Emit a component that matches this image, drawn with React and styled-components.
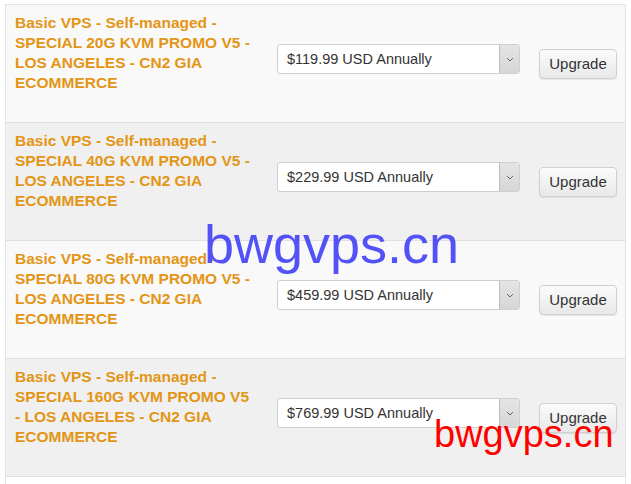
import React from "react";
import styled, { createGlobalStyle } from "styled-components";

const Global = createGlobalStyle`
  html, body { margin: 0; padding: 0; background: #ffffff; }
  body { font-family: "Liberation Sans", Arial, sans-serif; width: 631px; height: 484px; overflow: hidden; position: relative; }
`;

const Page = styled.div`
  padding: 4px 5px 0 5px;
  width: 621px;
  box-sizing: content-box;
`;

const Table = styled.div`
  border: 1px solid #e3e3e3;
  border-bottom: none;
  display: flex;
  flex-direction: column;
`;

const Row = styled.div`
  display: grid;
  grid-template-columns: 243px 243px 78px;
  column-gap: 19px;
  align-items: start;
  height: 118px;
  box-sizing: border-box;
  padding: 8px 0 0 9px;
  background: ${(p) => (p.$alt ? "#f0f0f0" : "#f9f9f9")};
  border-bottom: 1px solid #e0e0e0;
`;

const BlankRow = styled.div`
  height: 20px;
  background: #ffffff;
`;

const Title = styled.div`
  font-size: 15.5px;
  line-height: 20px;
  font-weight: bold;
  color: #e39516;
  width: 240px;
`;

const Select = styled.div`
  margin-top: 31px;
  height: 30px;
  box-sizing: border-box;
  display: flex;
  border: 1px solid #cfcfcf;
  border-radius: 3px;
  background: #ffffff;
  overflow: hidden;
`;

const SelectValue = styled.div`
  flex: 1;
  font-size: 14.5px;
  line-height: 28px;
  color: #333333;
  padding-left: 9px;
`;

const Arrow = styled.div`
  width: 19px;
  border-left: 1px solid #bdbdbd;
  background: linear-gradient(#e4e4e4, #d6d6d6);
  display: flex;
  align-items: center;
  justify-content: center;
`;

const Button = styled.div`
  margin-top: 36px;
  height: 30px;
  box-sizing: border-box;
  border: 1px solid #d0d0d0;
  border-radius: 4px;
  background: linear-gradient(#fbfbfb, #e8e8e8);
  box-shadow: 0 1px 1px rgba(0, 0, 0, 0.08);
  font-size: 15px;
  line-height: 28px;
  color: #333333;
  text-align: center;
`;

const Watermark = styled.div`
  position: absolute;
  left: ${(p) => p.$x}px;
  top: ${(p) => p.$y}px;
  font-family: "Liberation Sans", Arial, sans-serif;
  font-size: ${(p) => p.$size}px;
  line-height: 1;
  color: ${(p) => p.$color};
  white-space: nowrap;
  pointer-events: none;
`;

const items = [
  { size: "20G", price: "$119.99" },
  { size: "40G", price: "$229.99" },
  { size: "80G", price: "$459.99" },
  { size: "160G", price: "$769.99" },
];

export default function App() {
  return (
    <>
      <Global />
      <Page>
        <Table>
          {items.map((it, i) => (
            <Row key={it.size} $alt={i % 2 === 1}>
              <Title>
                Basic VPS - Self-managed - SPECIAL {it.size} KVM PROMO V5 - LOS ANGELES - CN2 GIA ECOMMERCE
              </Title>
              <Select>
                <SelectValue>{it.price} USD Annually</SelectValue>
                <Arrow>
                  <svg width="8" height="5" viewBox="0 0 8 5">
                    <path d="M1 1 L4 4 L7 1" fill="none" stroke="#666" strokeWidth="1" />
                  </svg>
                </Arrow>
              </Select>
              <Button>Upgrade</Button>
            </Row>
          ))}
          <BlankRow />
        </Table>
      </Page>
      <Watermark $x={204} $y={217} $size={54} $color="#5252f7">bwgvps.cn</Watermark>
      <Watermark $x={434} $y={415} $size={38} $color="#ff0000">bwgvps.cn</Watermark>
    </>
  );
}
